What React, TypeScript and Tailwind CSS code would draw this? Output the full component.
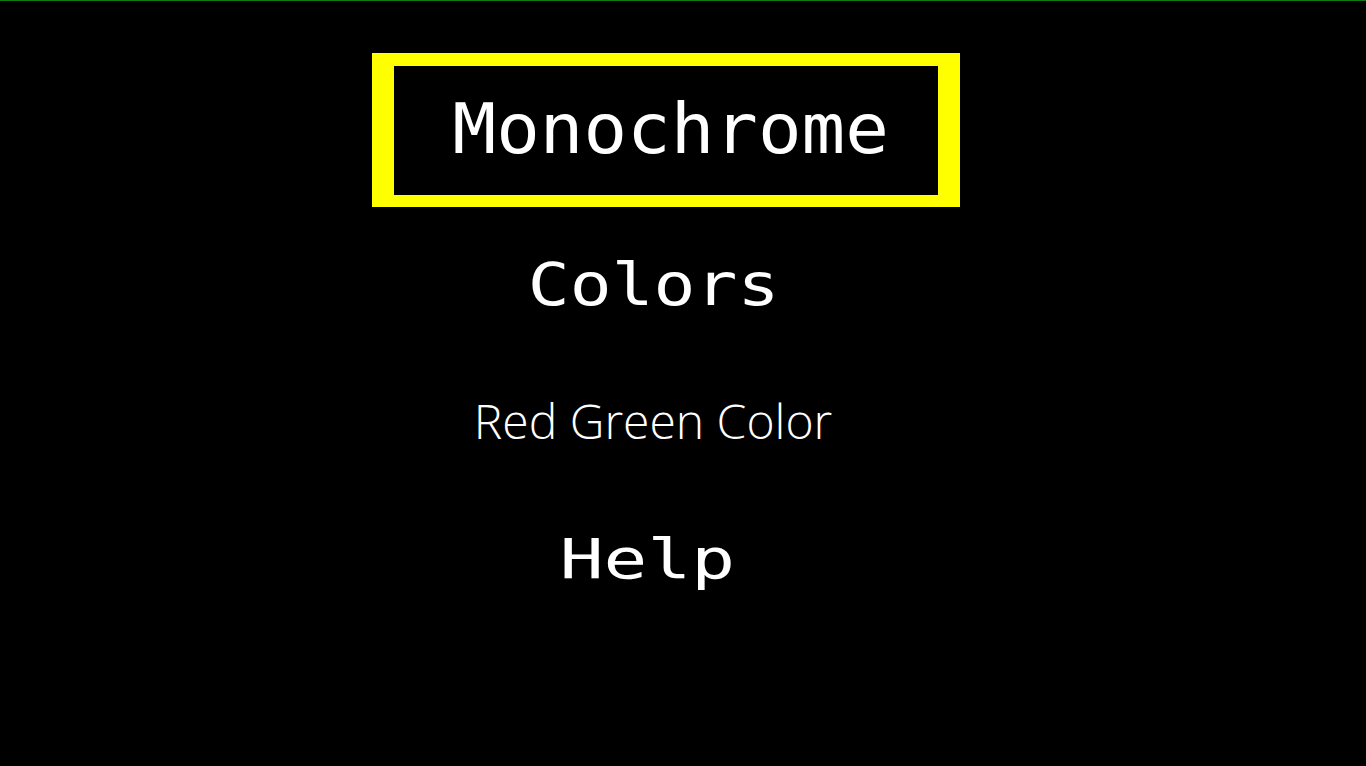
import React from "react"

const mono = { fontFamily: '"DejaVu Sans Mono", "Liberation Mono", monospace' }

export default function App() {
  return (
    <div className="h-[766px] w-full overflow-hidden bg-black">
      <div className="h-px w-full bg-[#0e7c0e]" />
      <div className="flex flex-col items-center pr-[34px] pt-[52px]">
        <div className="flex h-[154px] w-[588px] items-center justify-center border-x-[22px] border-t-[13px] border-b-[12px] border-[#ffff00] pb-[4px] pl-[9px]">
          <span className="scale-x-[1.035] text-[70px] leading-none text-white" style={mono}>
            Monochrome
          </span>
        </div>
        <span
          className="mr-[24px] mt-[48px] scale-x-[1.18] text-[59px] leading-none text-white"
          style={mono}
        >
          Colors
        </span>
        <span className="mr-[26px] mt-[83px] font-['Open_Sans',sans-serif] text-[48px] font-light leading-none text-white">
          Red Green Color
        </span>
        <span
          className="mr-[38px] mt-[86px] scale-x-[1.3] text-[56px] leading-none text-white"
          style={mono}
        >
          Help
        </span>
      </div>
    </div>
  )
}
